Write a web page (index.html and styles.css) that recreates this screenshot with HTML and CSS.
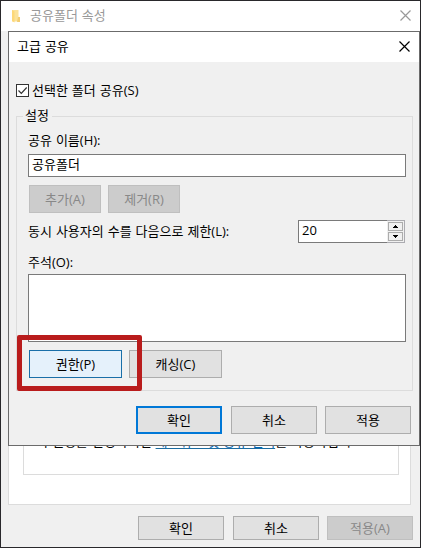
FILE: index.html
```html
<!DOCTYPE html>
<html lang="ko">

<head>
  <meta charset="UTF-8">
  <meta name="viewport" content="width=device-width, initial-scale=1.0">
  <title>고급 공유</title>
  <link rel="stylesheet" href="styles.css">
</head>

<body>
  <div class="window">
    <div class="title-bar inactive">
      <svg class="folder-icon" width="11" height="14" viewBox="0 0 11 14">
        <path d="M1 1h6.500v7H9v4.500H1z" fill="#fbe29a"/>
        <path d="M7 8h2v5H6z" fill="#f3cd72"/>
        <path d="M1 1l2.500 1.500V13.500L1 12z" fill="#fdd878"/>
      </svg>
      <span class="title">공유폴더 속성</span>
      <svg class="close" width="11" height="11" viewBox="0 0 11 11"><path d="M.5.5l10 10M10.500.5l-10 10"/></svg>
    </div>
    <div class="tab-page">
      <div class="note-box">
        <p class="note">이 설정을 변경하려면 <a class="link">네트워크 및 공유 센터</a>를 사용하십시오.</p>
      </div>
    </div>
    <div class="window-buttons">
      <button class="btn">확인</button>
      <button class="btn">취소</button>
      <button class="btn apply" disabled>적용(A)</button>
    </div>
  </div>

  <div class="dialog">
    <div class="title-bar">
      <span class="title">고급 공유</span>
      <svg class="close" width="11" height="11" viewBox="0 0 11 11"><path d="M.5.5l10 10M10.500.5l-10 10"/></svg>
    </div>

    <div class="check-row">
      <svg class="checkbox" width="13" height="13" viewBox="0 0 13 13">
        <rect x=".5" y=".5" width="12" height="12" fill="#fff" stroke="#333"/>
        <path d="M2.500 6.500l2.800 2.800L10.700 3.500" fill="none" stroke="#333" stroke-width="1.200"/>
      </svg>
      <span class="check-label">선택한 폴더 공유(S)</span>
    </div>

    <div class="group">
      <span class="legend">설정</span>
      <div class="label name-label">공유 이름(H):</div>
      <div class="field">공유폴더</div>
      <div class="row">
        <button class="btn small" disabled>추가(A)</button>
        <button class="btn small" disabled>제거(R)</button>
      </div>
      <div class="limit-row">
        <span class="label limit-label">동시 사용자의 수를 다음으로 제한(L):</span>
        <div class="spinner">
          <span class="value">20</span>
          <div class="arrows">
            <div class="arrow"><svg width="5" height="3" viewBox="0 0 5 3"><path d="M2 0h1v1h1v1h1v1H0V2h1V1h1z"/></svg></div>
            <div class="arrow"><svg width="5" height="3" viewBox="0 0 5 3"><path d="M0 0h5v1H4v1H3v1H2V2H1V1H0z"/></svg></div>
          </div>
        </div>
      </div>
      <div class="label comment-label">주석(O):</div>
      <div class="comment"></div>
      <div class="row last">
        <button class="btn medium hot">권한(P)</button>
        <button class="btn medium">캐싱(C)</button>
      </div>
    </div>

    <div class="dialog-buttons">
      <button class="btn default">확인</button>
      <button class="btn">취소</button>
      <button class="btn apply">적용</button>
    </div>
    <div class="highlight"></div>
  </div>
</body>

</html>
```

FILE: styles.css
```css
* {
  box-sizing: border-box;
}

body {
  margin: 0;
  position: relative;
  font-family: "Open Sans", "Noto Sans CJK KR", sans-serif;
  font-size: 13px;
  line-height: 18px;
  word-spacing: 0.6px;
  color: #000;
  white-space: nowrap;
}

.window {
  display: flex;
  flex-direction: column;
  width: 421px;
  height: 548px;
  border: 1px solid #29282b;
  background: #f0f0f0;
}

.title-bar {
  display: flex;
  align-items: center;
  height: 30px;
  padding: 0 9px 1px 8px;
  background: #fff;
}

.title-bar.inactive {
  padding: 0 9px 1px 10px;
  color: #999;
}

.folder-icon {
  margin-right: 8px;
}

.title {
  flex: 1;
  padding-bottom: 1px;
}

.close {
  fill: none;
  stroke: #000;
  stroke-width: 1.2;
}

.inactive .close {
  stroke: #999;
}

.tab-page {
  display: flex;
  width: 403px;
  height: 474px;
  margin-left: 7px;
  padding: 0 11px 29px 14px;
  border: 1px solid #dcdcdc;
  background: #fff;
}

.note-box {
  display: flex;
  align-items: flex-end;
  flex: 1;
  padding: 0 0 24px 12px;
  border: 1px solid #dcdcdc;
}

.note {
  margin: 0;
}

.link {
  color: #0066b4;
  text-decoration: underline 1px #1a6ba0;
  text-decoration-skip-ink: none;
  text-underline-offset: 2px;
}

.window-buttons {
  display: flex;
  gap: 9px;
  margin: 11px 0 0 137px;
}

.btn {
  width: 86px;
  height: 28px;
  padding: 0;
  border: 1px solid #adadad;
  background: #e1e1e1;
  color: #000;
  font: inherit;
  word-spacing: inherit;
}

.window-buttons .btn {
  height: 24px;
}

.btn:disabled {
  border-color: #bfbfbf;
  background: #ccc;
  color: #888;
}

.btn.small {
  width: 72px;
}

.btn.medium {
  width: 93px;
}

.btn.apply {
  margin-left: -1px;
}

.btn.hot {
  border-color: #1a6fa8;
  background: #e5f1fb;
}

.btn.default {
  border: 2px solid #0078d7;
}

/* modal on top of the properties window */
.dialog {
  position: absolute;
  left: 8px;
  top: 31px;
  width: 412px;
  height: 415px;
  border: 1px solid #6b6b6b;
  background: #f0f0f0;
}

.check-row {
  display: flex;
  align-items: center;
  gap: 3px;
  height: 18px;
  margin: 19px 0 0 7px;
}

.group {
  width: 397px;
  height: 275px;
  margin: 17px 0 0 7px;
  padding-left: 11px;
  border: 1px solid #dcdcdc;
}

.legend {
  display: block;
  width: 29px;
  margin: -11px 0 0 -5px;
  padding-left: 2px;
  background: #f0f0f0;
}

.name-label {
  margin-top: 7px;
}

.field {
  width: 378px;
  height: 23px;
  margin-top: 5px;
  padding: 0 3px;
  border: 1px solid #7a7a7a;
  background: #fff;
}

.row {
  display: flex;
  gap: 7px;
  margin: 8px 0 0 1px;
}

.limit-row {
  display: flex;
  justify-content: space-between;
  align-items: center;
  width: 377px;
  margin-top: 7px;
}

.limit-label {
  padding-bottom: 2px;
}

.spinner {
  display: flex;
  width: 107px;
  height: 23px;
  border: 1px solid #7a7a7a;
  border-right: 0;
  background: #fff;
}

.value {
  flex: 1;
  padding: 0 3px;
}

.arrows {
  display: flex;
  flex-direction: column;
  gap: 1px;
  width: 18px;
  height: 23px;
  margin-top: -1px;
  padding: 1px;
  border: 1px solid #ababb0;
  border-left: 0;
  background: #f0f0f0;
}

.arrow {
  display: flex;
  flex: 1;
  align-items: center;
  justify-content: center;
  border: 1px solid #acacac;
}

.comment-label {
  margin-top: 10px;
}

.comment {
  width: 378px;
  height: 68px;
  margin-top: 3px;
  border: 1px solid #7a7a7a;
  background: #fff;
}

.dialog-buttons {
  display: flex;
  gap: 9px;
  margin: 15px 0 0 127px;
}

/* red marker around the permissions button */
.highlight {
  position: absolute;
  left: 8px;
  top: 303px;
  width: 125px;
  height: 56px;
  border: 5px solid #b91c1c;
  border-radius: 2px;
}
```
